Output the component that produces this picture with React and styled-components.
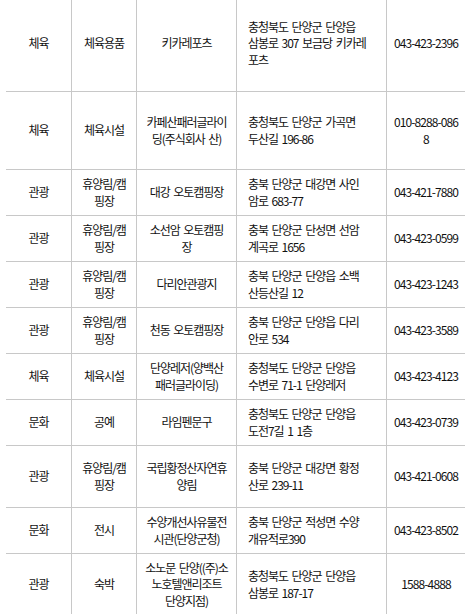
import React from "react";
import styled, { createGlobalStyle } from "styled-components";

const GlobalStyle = createGlobalStyle`
  html, body {
    margin: 0;
    padding: 0;
    background: #ffffff;
    overflow: hidden;
  }
  body {
    font-family: "Noto Sans CJK KR", "Noto Sans", sans-serif;
    color: #111111;
  }
`;

const Page = styled.div`
  padding-left: 6px;
  margin-top: -4px;
`;

const Table = styled.div`
  width: 460px;
  display: flex;
  flex-direction: column;
`;

const Row = styled.div`
  display: grid;
  grid-template-columns: 66px 65px 100px 150px 79px;
  height: ${(p) => p.$h}px;
`;

const Cell = styled.div`
  box-sizing: border-box;
  display: flex;
  flex-direction: column;
  justify-content: center;
  align-items: ${(p) => (p.$left ? "flex-start" : "center")};
  text-align: ${(p) => (p.$left ? "left" : "center")};
  padding: ${(p) => (p.$left ? "0 2px 0 11px" : "0 1px")};
  border-right: 1px solid #c8c8c8;
  border-bottom: 1px solid #c8c8c8;
  font-size: 12px;
  letter-spacing: ${(p) => (p.$phone ? "-0.9px" : "-1.05px")};
  word-spacing: ${(p) => (p.$phone ? "0" : "2px")};
  line-height: 16.5px;
  overflow: hidden;
`;

const Line = styled.span`
  display: block;
  white-space: nowrap;
`;

const rows = [
  { h: 96, c: ["체육", "체육용품", "키카레포츠", "충청북도 단양군 단양읍\n삼봉로 307 보금당 키카레\n포츠", "043-423-2396"] },
  { h: 78, c: ["체육", "체육시설", "카페산패러글라이\n딩(주식회사 산)", "충청북도 단양군 가곡면\n두산길 196-86", "010-8288-086\n8"] },
  { h: 46, c: ["관광", "휴양림/캠\n핑장", "대강 오토캠핑장", "충북 단양군 대강면 사인\n암로 683-77", "043-421-7880"] },
  { h: 46, c: ["관광", "휴양림/캠\n핑장", "소선암 오토캠핑\n장", "충북 단양군 단성면 선암\n계곡로 1656", "043-423-0599"] },
  { h: 46, c: ["관광", "휴양림/캠\n핑장", "다리안관광지", "충북 단양군 단양읍 소백\n산등산길 12", "043-423-1243"] },
  { h: 46, c: ["관광", "휴양림/캠\n핑장", "천동 오토캠핑장", "충북 단양군 단양읍 다리\n안로 534", "043-423-3589"] },
  { h: 46, c: ["체육", "체육시설", "단양레저(양백산\n패러글라이딩)", "충청북도 단양군 단양읍\n수변로 71-1 단양레저", "043-423-4123"] },
  { h: 46, c: ["문화", "공예", "라임펜문구", "충청북도 단양군 단양읍\n도전7길 1 1층", "043-423-0739"] },
  { h: 62, c: ["관광", "휴양림/캠\n핑장", "국립황정산자연휴\n양림", "충북 단양군 대강면 황정\n산로 239-11", "043-421-0608"] },
  { h: 46, c: ["문화", "전시", "수양개선사유물전\n시관(단양군청)", "충북 단양군 적성면 수양\n개유적로390", "043-423-8502"] },
  { h: 62, c: ["관광", "숙박", "소노문 단양((주)소\n노호텔앤리조트\n단양지점)", "충청북도 단양군 단양읍\n삼봉로 187-17", "1588-4888"] },
];

const Lines = ({ text }) =>
  text.split("\n").map((t, i) => <Line key={i}>{t}</Line>);

export default function App() {
  return (
    <>
      <GlobalStyle />
      <Page>
        <Table>
          {rows.map((r, i) => (
            <Row key={i} $h={r.h}>
              <Cell><Lines text={r.c[0]} /></Cell>
              <Cell><Lines text={r.c[1]} /></Cell>
              <Cell><Lines text={r.c[2]} /></Cell>
              <Cell $left><Lines text={r.c[3]} /></Cell>
              <Cell $phone><Lines text={r.c[4]} /></Cell>
            </Row>
          ))}
        </Table>
      </Page>
    </>
  );
}
